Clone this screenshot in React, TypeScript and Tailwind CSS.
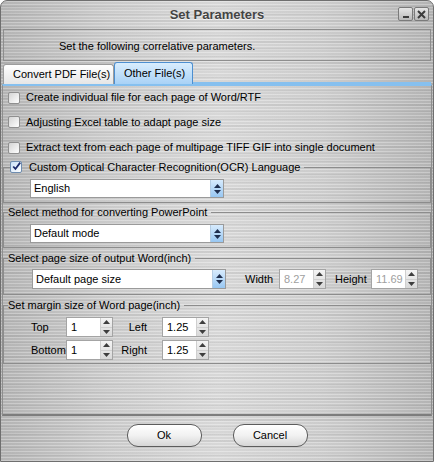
import React from "react";

const metal =
  "[background-image:repeating-linear-gradient(180deg,rgba(255,255,255,0.22)_0px,rgba(255,255,255,0.22)_1px,rgba(0,0,0,0.03)_1px,rgba(0,0,0,0.03)_3px),repeating-linear-gradient(180deg,rgba(0,0,0,0)_0px,rgba(0,0,0,0)_5px,rgba(0,0,0,0.045)_5px,rgba(0,0,0,0.045)_7px),linear-gradient(90deg,#bababa,#d1d1d1_25%,#dedede_50%,#d2d2d2_75%,#b9b9b9)]";

function Tri({up, color}: {up?: boolean; color: string}) {
  return (
    <svg width="7" height="4" viewBox="0 0 7 4">
      <path d={up ? "M0 4 L3.5 0 L7 4 Z" : "M0 0 L3.5 4 L7 0 Z"} fill={color} />
    </svg>
  );
}

function Checkbox({checked}: {checked?: boolean}) {
  if (checked) {
    return (
      <div className="flex h-[12px] w-[12px] items-center justify-center rounded-[2px] border border-[#6f8db0] bg-gradient-to-br from-[#c9e0f7] to-[#ffffff]">
        <svg width="11" height="11" viewBox="0 0 11 11" className="-mt-[2px] ml-[1px]">
          <path d="M1.5 5.5 L4.2 8.5 L10 0.8" stroke="#1b2a6b" strokeWidth="2.2" fill="none" />
        </svg>
      </div>
    );
  }
  return <div className="h-[12px] w-[12px] rounded-[2px] border border-[#8f8f8f] bg-gradient-to-br from-[#d4d4d4] to-[#ffffff]" />;
}

function Select({value, h = "h-[19px]"}: {value: string; h?: string}) {
  return (
    <div className={`flex ${h} w-[194px] border border-[#9a9a9a] bg-white`}>
      <div className="flex flex-1 items-center pl-[3px] text-black">{value}</div>
      <div className="flex w-[13px] flex-col items-center justify-center gap-[2px] border-l border-[#b5cde4] bg-gradient-to-b from-[#d7ebfd] to-[#98c7f2]">
        <Tri up color="#1f2f4f" />
        <Tri color="#1f2f4f" />
      </div>
    </div>
  );
}

function Spin({value, disabled}: {value: string; disabled?: boolean}) {
  return (
    <div className="flex h-[20px] w-[47px] border border-[#a4a4a4] bg-white">
      <div className={`flex flex-1 items-center pl-[4px] ${disabled ? "text-[#a0a0a0]" : "text-black"}`}>{value}</div>
      <div className="flex w-[12px] flex-col border-l border-[#cfcfcf] bg-gradient-to-b from-[#f4f4f4] to-[#d8d8d8]">
        <div className="flex flex-1 items-center justify-center border-b border-[#cfcfcf]">
          <Tri up color="#3e3e3e" />
        </div>
        <div className="flex flex-1 items-center justify-center">
          <Tri color="#3e3e3e" />
        </div>
      </div>
    </div>
  );
}

function GroupHead({lead, children}: {lead: string; children: React.ReactNode}) {
  return (
    <div className="flex h-[14px] items-center">
      <div className={`h-[7px] self-end border-l border-t border-[#8c8c8c] ${lead}`} />
      {children}
      <div className="ml-[4px] h-[7px] flex-1 self-end border-r border-t border-[#8c8c8c]" />
    </div>
  );
}

function MetalButton({label}: {label: string}) {
  return (
    <button
      type="button"
      className="flex h-[23px] w-[75px] items-center justify-center rounded-[11px] border border-[#5c5c5c] bg-gradient-to-b from-[#ffffff] via-[#f1f1f1] to-[#d6d6d6] text-black shadow-[inset_0_1px_0_#fff]"
    >
      {label}
    </button>
  );
}

export default function App() {
  return (
    <div
      className={`flex h-[462px] w-[434px] flex-col overflow-hidden rounded-t-[7px] border border-[#6f6f6f] font-['Liberation_Sans',Arial,sans-serif] text-[11px] text-black ${metal}`}
    >
      {/* Title bar */}
      <div className="relative flex h-[27px] items-center justify-center">
        <span className="text-[13px] font-bold text-[#444] [text-shadow:0_1px_0_#f4f4f4]">Set Parameters</span>
        <div className="absolute right-[4px] top-[6px] flex gap-[1px]">
          <div className="flex h-[14px] w-[15px] items-end justify-center rounded-[2px] border border-[#7a7a7a] bg-gradient-to-b from-[#e6e6e6] to-[#b9b9b9] pb-[2px]">
            <div className="h-[2px] w-[6px] bg-[#3c3c3c]" />
          </div>
          <div className="flex h-[14px] w-[15px] items-center justify-center rounded-[2px] border border-[#7a7a7a] bg-gradient-to-b from-[#e6e6e6] to-[#b9b9b9]">
            <svg width="9" height="9" viewBox="0 0 9 9">
              <path d="M1 1 L8 8 M8 1 L1 8" stroke="#3c3c3c" strokeWidth="2" />
            </svg>
          </div>
        </div>
      </div>

      {/* Header */}
      <div className="mx-[2px] mt-[1px] flex h-[32px] items-center border border-[#8e8e8e] pl-[55px] pt-[3px]">
        Set the following correlative parameters.
      </div>

      {/* Tabs */}
      <div className="mt-[1px] flex h-[22px] items-end whitespace-nowrap px-[2px]">
        <div className="flex h-[20px] w-[111px] items-center rounded-t-[3px] border border-b-0 border-[#9c9c9c] bg-gradient-to-b from-[#ffffff] to-[#e6e6e6] pl-[9px]">
          Convert PDF File(s)
        </div>
        <div className="flex h-[22px] w-[79px] items-center rounded-t-[3px] border border-b-0 border-[#4d8fd0] bg-gradient-to-b from-[#d9edfd] to-[#a9d2f6] pl-[9px]">
          Other File(s)
        </div>
        <div className="h-[2px] flex-1 bg-[#86c0ef]" />
      </div>

      {/* Content */}
      <div className="mx-[1px] flex h-[332px] flex-col border-x border-b-2 border-t-2 border-[#8e8e8e] border-t-[#86c0ef] border-b-[#7d7d7d]">
        <div className="flex h-[23px] items-center gap-[6px] pl-[5px]">
          <Checkbox />
          <span>Create individual file for each page of Word/RTF</span>
        </div>
        <div className="flex h-[26px] items-center gap-[6px] pl-[5px]">
          <Checkbox />
          <span>Adjusting Excel table to adapt page size</span>
        </div>
        <div className="flex h-[25px] items-center gap-[6px] pl-[5px]">
          <Checkbox />
          <span>Extract text from each page of multipage TIFF GIF into single document</span>
        </div>

        {/* OCR group */}
        <div>
          <GroupHead lead="w-[7px]">
            <Checkbox checked />
            <span className="ml-[7px]">Custom Optical Character Recognition(OCR) Language</span>
          </GroupHead>
          <div className="border-x border-b border-[#8c8c8c] pb-[4px] pl-[26px] pt-[5px]">
            <Select value="English" />
          </div>
        </div>

        {/* PowerPoint group */}
        <div className="mt-[2px]">
          <GroupHead lead="w-[5px]">
            <span>Select method for converting PowerPoint</span>
          </GroupHead>
          <div className="border-x border-b border-[#8c8c8c] pb-[4px] pl-[26px] pt-[5px]">
            <Select value="Default mode" />
          </div>
        </div>

        {/* Page size group */}
        <div className="mt-[3px]">
          <GroupHead lead="w-[5px]">
            <span>Select page size of output Word(inch)</span>
          </GroupHead>
          <div className="flex items-center border-x border-b border-[#8c8c8c] pb-[5px] pl-[28px] pt-[4px]">
            <Select value="Default page size" h="h-[20px]" />
            <span className="ml-[19px] w-[34px]">Width</span>
            <Spin value="8.27" disabled />
            <span className="ml-[9px] w-[36px]">Height</span>
            <Spin value="11.69" disabled />
          </div>
        </div>

        {/* Margin group */}
        <div className="mt-[3px]">
          <GroupHead lead="w-[5px]">
            <span>Set margin size of Word page(inch)</span>
          </GroupHead>
          <div className="flex flex-col gap-[3px] border-x border-b border-[#8c8c8c] pb-[3px] pl-[27px] pt-[5px]">
            <div className="flex items-center">
              <span className="w-[35px]">Top</span>
              <Spin value="1" />
              <span className="w-[34px] text-right">Left</span>
              <span className="w-[15px]" />
              <Spin value="1.25" />
            </div>
            <div className="flex items-center">
              <span className="w-[35px]">Bottom</span>
              <Spin value="1" />
              <span className="w-[34px] text-right">Right</span>
              <span className="w-[15px]" />
              <Spin value="1.25" />
            </div>
          </div>
        </div>
      </div>

      {/* Footer */}
      <div className="flex flex-1 justify-center gap-[31px] pt-[8px]">
        <MetalButton label="Ok" />
        <MetalButton label="Cancel" />
      </div>
    </div>
  );
}
